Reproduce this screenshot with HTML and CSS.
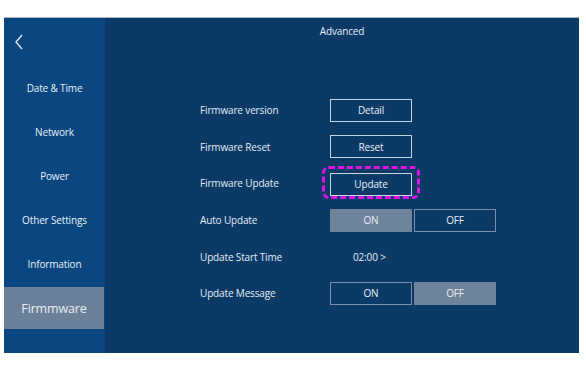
FILE: index.html
```html
<!DOCTYPE html>
<html lang="en">
<head>
  <meta charset="UTF-8">
  <meta name="viewport" content="width=device-width, initial-scale=1.0">
  <link rel="stylesheet" href="styles.css">
  <title>Advanced</title>
</head>
<body>
  <div class="screen">
    <div class="sidebar">
      <div class="back">
        <svg width="10" height="16" viewBox="0 0 10 16">
          <path d="M8 1 L2 8 L8 15" fill="none" stroke="#dfe8f2" stroke-width="1.4"/>
        </svg>
      </div>
      <div class="menu-item">Date &amp; Time</div>
      <div class="menu-item">Network</div>
      <div class="menu-item">Power</div>
      <div class="menu-item">Other Settings</div>
      <div class="menu-item">Information</div>
      <div class="menu-item active">Firmmware</div>
    </div>

    <div class="main">
      <div class="title">Advanced</div>
      <div class="rows">
        <div class="row">
          <div class="label">Firmware version</div>
          <button class="btn">Detail</button>
        </div>
        <div class="row">
          <div class="label">Firmware Reset</div>
          <button class="btn">Reset</button>
        </div>
        <div class="row">
          <div class="label">Firmware Update</div>
          <div class="highlight">
            <button class="btn">Update</button>
          </div>
        </div>
        <div class="row">
          <div class="label">Auto Update</div>
          <div class="toggle">
            <button class="btn on">ON</button>
            <button class="btn">OFF</button>
          </div>
        </div>
        <div class="row">
          <div class="label">Update Start Time</div>
          <div class="value">02:00 &gt;</div>
        </div>
        <div class="row">
          <div class="label">Update Message</div>
          <div class="toggle">
            <button class="btn">ON</button>
            <button class="btn on">OFF</button>
          </div>
        </div>
      </div>
    </div>
  </div>
</body>
</html>
```

FILE: styles.css
```css
body {
  margin: 0;
  background-color: #fff;
  font-family: "Open Sans", "Noto Sans", sans-serif;
  letter-spacing: -0.15px;
}

.screen {
  display: flex;
  width: 575px;
  height: 335px;
  margin: 17px 0 0 4px;
  border-top: 1px solid #a9b5c3;
  background-color: #0b3a66;
}

.sidebar {
  width: 101px;
  background-color: #0a4781;
  display: flex;
  flex-direction: column;
}

.back {
  height: 48px;
  padding-left: 10px;
  display: flex;
  align-items: center;
}

.menu-item {
  height: 44px;
  display: flex;
  align-items: center;
  justify-content: center;
  font-size: 10px;
  color: #e6edf5;
}

.menu-item.active {
  height: 42px;
  margin-top: 1px;
  margin-right: 1px;
  background-color: #6d8099;
  font-size: 12.5px;
}

.main {
  flex: 1;
  display: flex;
  flex-direction: column;
}

.title {
  height: 26px;
  line-height: 26px;
  text-align: center;
  font-size: 10px;
  color: #e6edf5;
}

.rows {
  padding: 48px 0 0 95px;
}

.row {
  height: 36.6px;
  display: flex;
  align-items: center;
}

.label {
  width: 130px;
  font-size: 10px;
  color: #e3eaf3;
}

.btn {
  width: 82px;
  height: 23px;
  padding: 0;
  border: 1px solid #c5d3e2;
  background-color: transparent;
  color: #e9eff6;
  font-family: inherit;
  font-size: 10px;
  letter-spacing: inherit;
}

.toggle {
  display: flex;
  gap: 2px;
}

.toggle .btn {
  border-color: #7890ad;
}

.toggle .btn.on {
  background-color: #6f839b;
  border-color: #6f839b;
}

.highlight {
  position: relative;
}

.highlight::after {
  content: "";
  position: absolute;
  left: -8px;
  top: -5px;
  width: 92px;
  height: 27px;
  border: 3px dashed #dc14e6;
  border-radius: 7px;
}

.value {
  padding-left: 23px;
  font-size: 10px;
  color: #e3eaf3;
}
```
